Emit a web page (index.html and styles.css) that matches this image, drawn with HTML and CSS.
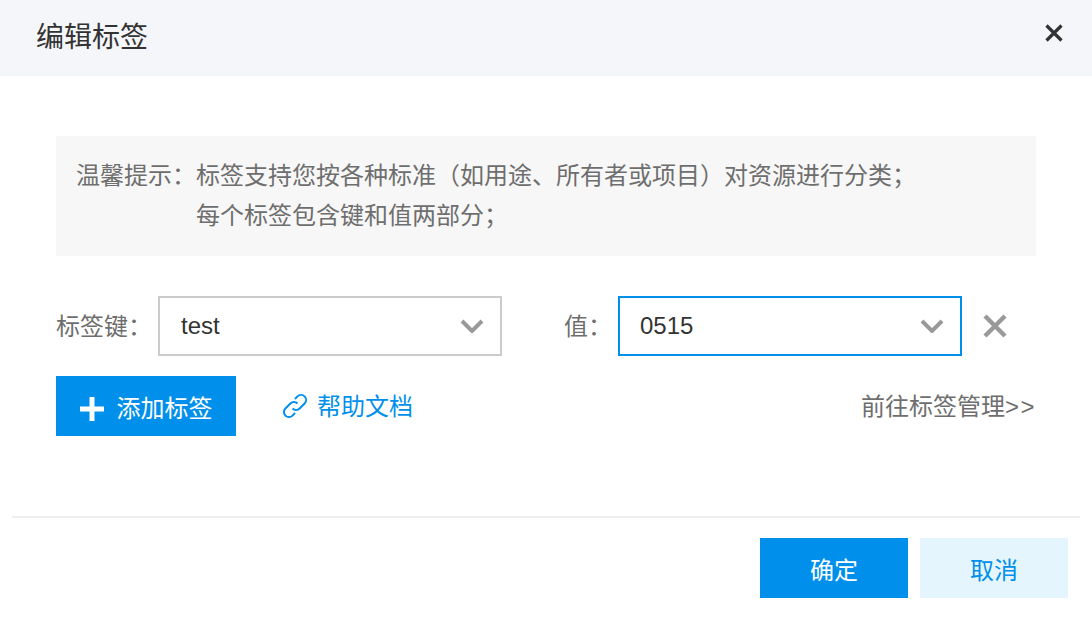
FILE: index.html
```html
<!DOCTYPE html>
<html lang="zh-CN">
<head>
    <meta charset="utf-8">
    <title>编辑标签</title>
    <link rel="stylesheet" href="styles.css">
</head>
<body>
<div class="dialog">
    <div class="head">
        <span class="head-title">编辑标签</span>
        <svg class="head-close" width="20" height="20" viewBox="0 0 20 20"><path d="M2.5 2.5L17.5 17.5M17.5 2.5L2.5 17.5" stroke="#333" stroke-width="3.2" fill="none"/></svg>
    </div>

    <div class="body">
        <div class="tip">
            <div class="tip-label">温馨提示：</div>
            <div class="tip-text">
                <div>标签支持您按各种标准（如用途、所有者或项目）对资源进行分类；</div>
                <div>每个标签包含键和值两部分；</div>
            </div>
        </div>

        <div class="tag-row">
            <span class="key-label">标签键：</span>
            <div class="select">
                <span>test</span>
                <svg width="24" height="14" viewBox="0 0 24 14"><path d="M2 2L12 12L22 2" stroke="#999" stroke-width="4" fill="none"/></svg>
            </div>
            <span class="val-label">值：</span>
            <div class="select select-on">
                <span>0515</span>
                <svg width="24" height="14" viewBox="0 0 24 14"><path d="M2 2L12 12L22 2" stroke="#999" stroke-width="4" fill="none"/></svg>
            </div>
            <svg class="row-del" width="26" height="26" viewBox="0 0 26 26"><path d="M3 3L23 23M23 3L3 23" stroke="#999" stroke-width="4.5" fill="none"/></svg>
        </div>

        <div class="action-row">
            <div class="btn btn-add">
                <svg class="add-icon" width="26" height="26" viewBox="0 0 26 26"><path d="M13 1V25M1 13H25" stroke="#fff" stroke-width="5" fill="none"/></svg>
                <span>添加标签</span>
            </div>
            <div class="help">
                <svg width="26" height="26" viewBox="0 0 26 26" fill="none" stroke="#0090eb" stroke-width="2"><path d="M10.5 15.5a5 5 0 0 0 7.1 0l5-5a5 5 0 0 0-7.1-7.1l-2.6 2.6"/><path d="M15.5 10.5a5 5 0 0 0-7.1 0l-5 5a5 5 0 0 0 7.1 7.1l2.6-2.6"/></svg>
                <span class="lift">帮助文档</span>
            </div>
            <div class="manage lift">前往标签管理<span class="arrows">&gt;&gt;</span></div>
        </div>
    </div>

    <div class="foot">
        <div class="btn btn-ok">确定</div>
        <div class="btn btn-cancel">取消</div>
    </div>
</div>
</body>
</html>
```

FILE: styles.css
```css
html, body { margin: 0; padding: 0; background: #fff; }
body { font-family: "Liberation Sans", "Noto Sans CJK SC", sans-serif; font-size: 24px; color: #6e6e6e; overflow: hidden; }

.dialog { width: 1092px; height: 618px; }

.head { height: 76px; background: #f5f6fa; display: flex; align-items: center; justify-content: space-between; padding: 0 28px 6px 36px; box-sizing: border-box; }
.head-title { font-size: 28px; color: #333; }
.head-close { margin-bottom: 4px; }

.body { height: 440px; padding: 60px 56px 0; box-sizing: border-box; }

.tip { height: 120px; background: #f7f7f7; display: flex; padding: 20px; box-sizing: border-box; line-height: 40px; }
.tip-label { width: 120px; flex: none; }

.tag-row { display: flex; align-items: center; height: 60px; margin-top: 40px; }
.key-label { width: 102px; flex: none; padding-bottom: 4px; }
.val-label { width: 54px; flex: none; margin-left: 62px; padding-bottom: 4px; }
.select { width: 344px; height: 60px; box-sizing: border-box; border: 2px solid #ccc; display: flex; align-items: center; justify-content: space-between; padding: 0 16px 0 21px; color: #333; }
.select-on { border-color: #0090eb; padding-left: 20px; }
.row-del { margin-left: 20px; }

.action-row { display: flex; align-items: center; height: 60px; margin-top: 20px; }
.btn { display: flex; align-items: center; justify-content: center; height: 60px; box-sizing: border-box; }
.btn-add { width: 180px; background: #0090eb; color: #fff; gap: 12px; padding-right: 1px; }
.add-icon { margin-top: 6px; }
.help { display: flex; align-items: center; gap: 9px; margin-left: 46px; color: #0090eb; }
.lift { padding-bottom: 4px; }
.manage { margin-left: auto; }
.arrows { letter-spacing: 1.5px; }

.foot { margin: 0 12px; height: 102px; border-top: 2px solid #eee; box-sizing: border-box; display: flex; justify-content: flex-end; gap: 12px; padding: 20px 12px 0 0; }
.btn-ok { width: 148px; background: #0090eb; color: #fff; }
.btn-cancel { width: 148px; background: #e5f5fd; color: #0090eb; }
```
